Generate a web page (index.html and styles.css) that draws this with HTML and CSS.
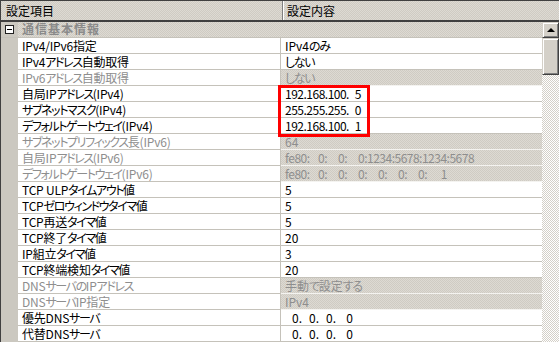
FILE: index.html
```html
<!DOCTYPE html>
<html lang="ja">
<head>
    <meta charset="UTF-8">
    <meta name="viewport" content="width=device-width, initial-scale=1.0">
    <title>設定項目</title>
    <link rel="stylesheet" href="styles.css">
</head>
<body>
    <div class="sheet">
        <div class="head">
            <div class="head-name">設定項目</div>
            <div class="head-value">設定内容</div>
        </div>
        <div class="body">
            <div class="rows">
                <div class="row group">
                    <span class="gutter"><span class="toggle"></span></span>
                    <span class="group-title">通信基本情報</span>
                </div>
                <div class="row"><span class="gutter"></span><span class="name">IPv4/IPv6指定</span><span class="value">IPv4<span class="k">のみ</span></span></div>
                <div class="row"><span class="gutter"></span><span class="name">IPv4<span class="k">アドレス</span>自動取得</span><span class="value"><span class="k">しない</span></span></div>
                <div class="row off"><span class="gutter"></span><span class="name">IPv6<span class="k">アドレス</span>自動取得</span><span class="value"><span class="k">しない</span></span></div>
                <div class="row"><span class="gutter"></span><span class="name">自局IP<span class="k">アドレス</span>(IPv4)</span><span class="value num">192.168.100.<span class="oct">5</span></span></div>
                <div class="row"><span class="gutter"></span><span class="name"><span class="k">サブネットマスク</span>(IPv4)</span><span class="value num">255.255.255.<span class="oct">0</span></span></div>
                <div class="row"><span class="gutter"></span><span class="name"><span class="k">デフォルトゲートウェイ</span>(IPv4)</span><span class="value num">192.168.100.<span class="oct">1</span></span></div>
                <div class="row off"><span class="gutter"></span><span class="name"><span class="k">サブネットプリフィックス</span>長(IPv6)</span><span class="value">64</span></div>
                <div class="row off"><span class="gutter"></span><span class="name">自局IP<span class="k">アドレス</span>(IPv6)</span><span class="value num"><span class="v6 lead">fe80:</span><span class="v6">0:</span><span class="v6">0:</span><span class="v6">0:</span>1234:5678:1234:5678</span></div>
                <div class="row off"><span class="gutter"></span><span class="name"><span class="k">デフォルトゲートウェイ</span>(IPv6)</span><span class="value num"><span class="v6 lead">fe80:</span><span class="v6">0:</span><span class="v6">0:</span><span class="v6">0:</span><span class="v6">0:</span><span class="v6">0:</span><span class="v6">0:</span><span class="v6">1</span></span></div>
                <div class="row"><span class="gutter"></span><span class="name">TCP ULP<span class="k">タイムアウト</span>値</span><span class="value">5</span></div>
                <div class="row"><span class="gutter"></span><span class="name">TCP<span class="k">ゼロウィンドウタイマ</span>値</span><span class="value">5</span></div>
                <div class="row"><span class="gutter"></span><span class="name">TCP再送<span class="k">タイマ</span>値</span><span class="value">5</span></div>
                <div class="row"><span class="gutter"></span><span class="name">TCP終了<span class="k">タイマ</span>値</span><span class="value">20</span></div>
                <div class="row"><span class="gutter"></span><span class="name">IP組立<span class="k">タイマ</span>値</span><span class="value">3</span></div>
                <div class="row"><span class="gutter"></span><span class="name">TCP終端検知<span class="k">タイマ</span>値</span><span class="value">20</span></div>
                <div class="row off"><span class="gutter"></span><span class="name">DNS<span class="k">サーバの</span>IP<span class="k">アドレス</span></span><span class="value">手動<span class="k">で</span>設定<span class="k">する</span></span></div>
                <div class="row off"><span class="gutter"></span><span class="name">DNS<span class="k">サーバ</span>IP指定</span><span class="value">IPv4</span></div>
                <div class="row"><span class="gutter"></span><span class="name">優先DNS<span class="k">サーバ</span></span><span class="value"><span class="dns">0.</span><span class="dns">0.</span><span class="dns">0.</span><span class="dns">0</span></span></div>
                <div class="row"><span class="gutter"></span><span class="name">代替DNS<span class="k">サーバ</span></span><span class="value"><span class="dns">0.</span><span class="dns">0.</span><span class="dns">0.</span><span class="dns">0</span></span></div>
            </div>
            <div class="scrollbar">
                <div class="sb-btn"><span class="arrow-up"></span></div>
                <div class="sb-thumb"></div>
                <div class="sb-track"></div>
            </div>
        </div>
        <!-- highlight around the IPv4 address block -->
        <div class="mark"></div>
    </div>
</body>
</html>
```

FILE: styles.css
```css
body {
    margin: 0;
    font-family: "Noto Sans CJK JP", sans-serif;
    font-size: 12px;
    font-feature-settings: "palt";
    color: #000;
    background: #fff;
}

.sheet {
    position: relative;
    width: 558px;
    height: 341px;
    border-left: 1px solid #404040;
    border-top: 1px solid #404040;
    overflow: hidden;
}

/* dotted classic-window grey */
.head,
.row.group,
.row.off .value {
    background: repeating-conic-gradient(#cfcbc3 0 25%, #dddad3 0 50%) 0 0 / 2px 2px;
}

.head {
    display: flex;
    height: 19px;
    border-bottom: 2px solid #404040;
    line-height: 19px;
}
.head-name {
    width: 276px;
    padding-left: 5px;
    border-right: 1px solid #808080;
}
.head-value {
    flex: 1;
    padding-left: 3px;
    border-left: 1px solid #fff;
}

.body {
    display: flex;
    height: 320px;
}
.rows {
    width: 541px;
}

.row {
    display: flex;
    height: 16px;
    line-height: 15px;
    white-space: nowrap;
}
.gutter {
    width: 17px;
    flex: none;
    background: #cbc8c0;
    position: relative;
}
.name {
    width: 258px;
    flex: none;
    padding-left: 4px;
    border-right: 1px solid #c5c2ba;
    border-bottom: 1px solid #c5c2ba;
    background: #fff;
    letter-spacing: -0.2px;
}
.value {
    flex: 1;
    padding-left: 4px;
    border-bottom: 1px solid #c5c2ba;
    background: #fff;
}
.value.num {
    letter-spacing: -0.5px;
}
/* kana run narrower than the kanji, as in the system UI font */
.k {
    letter-spacing: -1.4px;
}
.row.off .name,
.row.off .value {
    color: #8e8e8e;
}
.row.off .value {
    border-bottom-color: #f4f3f0;
}

.row.group {
    border-bottom: 1px solid #c5c2ba;
    height: 15px;
    line-height: 14px;
}
.group-title {
    padding-left: 4px;
    font-weight: bold;
    letter-spacing: 1px;
    color: #8a8a8a;
}
.toggle {
    position: absolute;
    left: 4px;
    top: 3px;
    width: 7px;
    height: 7px;
    border: 1px solid #202020;
    background: #fff;
}
.toggle::after {
    content: "";
    position: absolute;
    left: 1px;
    top: 3px;
    width: 5px;
    height: 1px;
    background: #000;
}

.oct {
    display: inline-block;
    width: 12px;
    text-align: right;
}
.v6 {
    display: inline-block;
    width: 20px;
    text-align: right;
}
.v6.lead {
    width: 22px;
    text-align: left;
}
.dns {
    display: inline-block;
    width: 17px;
    text-align: right;
}

.scrollbar {
    width: 17px;
    display: flex;
    flex-direction: column;
}
.sb-btn,
.sb-thumb {
    box-sizing: border-box;
    background: #d4d0c8;
    border: 1px solid;
    border-color: #d4d0c8 #404040 #404040 #d4d0c8;
    box-shadow: inset 1px 1px #fff, inset -1px -1px #808080;
}
.sb-btn {
    height: 16px;
    position: relative;
}
.arrow-up {
    position: absolute;
    left: 4px;
    top: 5px;
    border-left: 4px solid transparent;
    border-right: 4px solid transparent;
    border-bottom: 4px solid #000;
}
.sb-thumb {
    height: 37px;
}
.sb-track {
    flex: 1;
    background: repeating-conic-gradient(#d4d0c8 0 25%, #fff 0 50%) 0 0 / 2px 2px;
}

.mark {
    position: absolute;
    left: 277px;
    top: 84px;
    width: 86px;
    height: 46px;
    border: 3px solid #f00;
}
```
